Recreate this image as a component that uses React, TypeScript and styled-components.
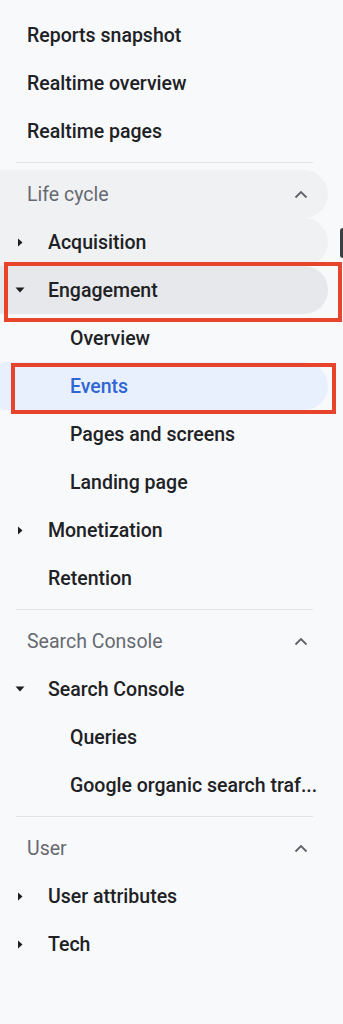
import React from "react";
import styled, { createGlobalStyle, css } from "styled-components";

const Global = createGlobalStyle`
  html, body { margin: 0; padding: 0; background: #f8f9fb; }
  body { font-family: Roboto, "Noto Sans", "Liberation Sans", sans-serif; -webkit-font-smoothing: antialiased; }
`;

const Nav = styled.nav`
  position: relative;
  width: 343px;
  min-height: 1024px;
  box-sizing: border-box;
  padding-top: 11px;
  background: #f8f9fb;
  overflow: hidden;
`;

type Tone = "none" | "hover" | "active" | "selected";

const Row = styled.div<{ $level: number; $tone?: Tone }>`
  position: relative;
  display: flex;
  align-items: center;
  height: 48px;
  margin-right: 15px;
  border-radius: 0 24px 24px 0;
  box-sizing: border-box;
  padding-left: ${(p) => (p.$level === 0 ? 27 : p.$level === 1 ? 48 : 70)}px;
  padding-right: 4px;
  font-size: 19.5px;
  font-weight: 500;
  color: #202124;
  white-space: nowrap;
  ${(p) =>
    p.$tone === "hover" &&
    css`
      background: #f0f1f3;
    `}
  ${(p) =>
    p.$tone === "active" &&
    css`
      background: #e7e8eb;
    `}
  ${(p) =>
    p.$tone === "selected" &&
    css`
      background: #e8f0fe;
      color: #2f66d4;
      border-radius: 4px 24px 24px 4px;
    `}
`;

const Label = styled.span`
  min-width: 0;
`;

const Header = styled(Row)`
  color: #666a70;
  font-weight: 400;
  justify-content: space-between;
  padding-right: 20px;
`;

const Caret = styled.span`
  position: absolute;
  left: 14px;
  top: 50%;
  width: 12px;
  height: 12px;
  margin-top: -6px;
  display: flex;
  align-items: center;
  justify-content: center;
`;

const Divider = styled.hr`
  border: none;
  height: 1px;
  background: #e1e3e6;
  margin: 7px 30px 7px 16px;
`;

const Annotation = styled.div<{ $t: number; $r: number; $b: number; $l: number }>`
  position: absolute;
  top: ${(p) => p.$t}px;
  right: ${(p) => p.$r}px;
  bottom: ${(p) => p.$b}px;
  left: ${(p) => p.$l}px;
  border: 4px solid #e8432b;
  pointer-events: none;
`;

const ScrollThumb = styled.div`
  position: absolute;
  right: -5px;
  top: 228px;
  width: 8px;
  height: 30px;
  border-radius: 3px;
  background: #3c4043;
`;

const CaretRight = () => (
  <svg width="6" height="9" viewBox="0 0 6 9">
    <path d="M1 0.5 L5.5 4.5 L1 8.5 Z" fill="#1f1f1f" />
  </svg>
);
const CaretDown = () => (
  <svg width="10" height="6" viewBox="0 0 10 6">
    <path d="M0.5 0.5 L9.5 0.5 L5 5.5 Z" fill="#1f1f1f" />
  </svg>
);
const ChevronUp = () => (
  <svg width="14" height="9" viewBox="0 0 14 9">
    <path d="M1.5 7.5 L7 2 L12.5 7.5" fill="none" stroke="#5f6368" strokeWidth="1.8" />
  </svg>
);

type Item = {
  label: string;
  level: number;
  caret?: "right" | "down";
  tone?: Tone;
  annotate?: [number, number, number, number];
};

const Item: React.FC<Item> = ({ label, level, caret, tone, annotate }) => (
  <Row $level={level} $tone={tone}>
    {caret && <Caret>{caret === "right" ? <CaretRight /> : <CaretDown />}</Caret>}
    <Label>{label}</Label>
    {annotate && (
      <Annotation $t={annotate[0]} $r={annotate[1]} $b={annotate[2]} $l={annotate[3]} />
    )}
  </Row>
);

const SectionHeader: React.FC<{ label: string; tone?: Tone }> = ({ label, tone }) => (
  <Header $level={0} $tone={tone}>
    <Label>{label}</Label>
    <ChevronUp />
  </Header>
);

export default function App() {
  return (
    <>
      <Global />
      <Nav>
        <Item label="Reports snapshot" level={0} />
        <Item label="Realtime overview" level={0} />
        <Item label="Realtime pages" level={0} />
        <Divider />
        <SectionHeader label="Life cycle" tone="hover" />
        <Item label="Acquisition" level={1} caret="right" tone="hover" />
        <Item label="Engagement" level={1} caret="down" tone="active" annotate={[-4, -14, -8, 4]} />
        <Item label="Overview" level={2} />
        <Item label="Events" level={2} tone="selected" annotate={[1, -8, -4, 11]} />
        <Item label="Pages and screens" level={2} />
        <Item label="Landing page" level={2} />
        <Item label="Monetization" level={1} caret="right" />
        <Item label="Retention" level={1} />
        <Divider />
        <SectionHeader label="Search Console" />
        <Item label="Search Console" level={1} caret="down" />
        <Item label="Queries" level={2} />
        <Item label="Google organic search traf..." level={2} />
        <Divider />
        <SectionHeader label="User" />
        <Item label="User attributes" level={1} caret="right" />
        <Item label="Tech" level={1} caret="right" />
        <ScrollThumb />
      </Nav>
    </>
  );
}
